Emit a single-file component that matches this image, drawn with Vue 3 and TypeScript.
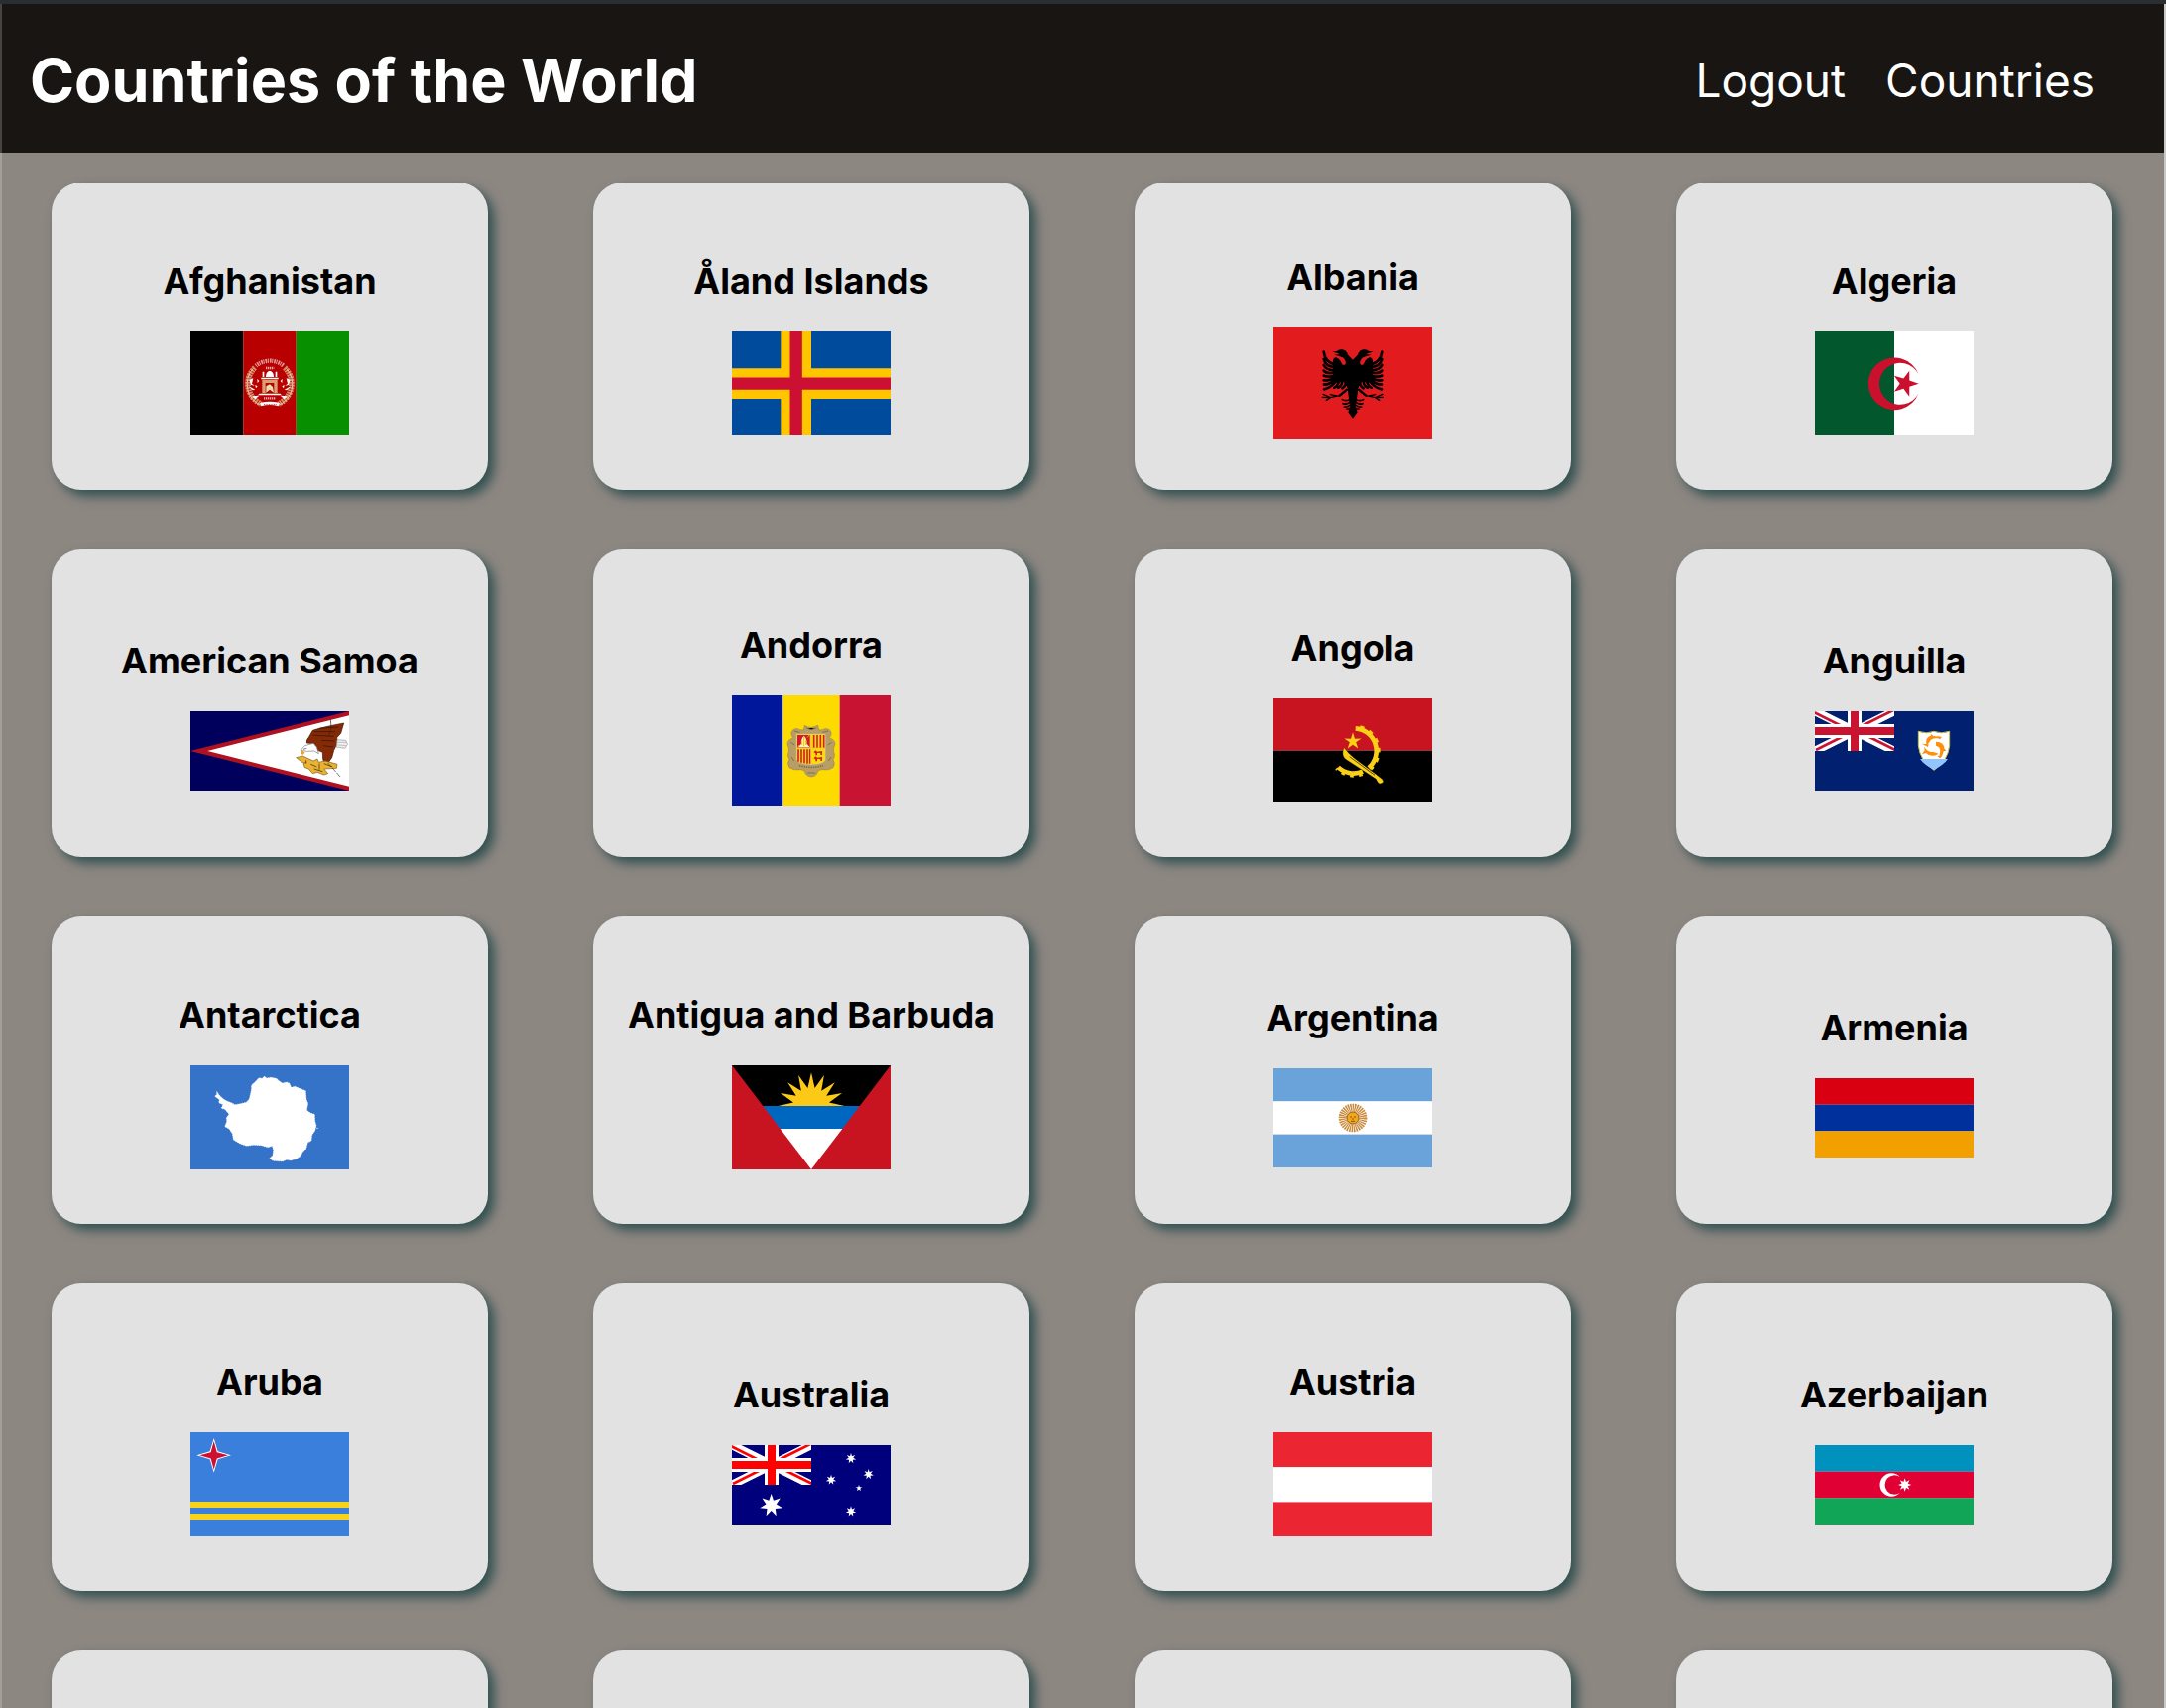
<script setup lang="ts">
interface Country {
  name: string
  height: number
  art: string
}

/* Flags are drawn on a 480-unit wide canvas, three units to the pixel. */

function star(cx: number, cy: number, outer: number, inner: number, points: number, fill: string, turn = -90): string {
  const coords: string[] = []
  for (let i = 0; i < points * 2; i++) {
    const r = i % 2 === 0 ? outer : inner
    const a = ((turn + (i * 180) / points) * Math.PI) / 180
    coords.push(`${(cx + r * Math.cos(a)).toFixed(1)},${(cy + r * Math.sin(a)).toFixed(1)}`)
  }
  return `<polygon points="${coords.join(' ')}" fill="${fill}"/>`
}

function rect(x: number, y: number, w: number, h: number, fill: string): string {
  return `<rect x="${x}" y="${y}" width="${w}" height="${h}" fill="${fill}"/>`
}

function bands(height: number, fills: string[]): string {
  const h = height / fills.length
  return fills.map((fill, i) => rect(0, i * h, 480, h, fill)).join('')
}

function unionJack(blue: string, red: string): string {
  return `<svg x="0" y="0" width="240" height="120" viewBox="0 0 240 120">
    ${rect(0, 0, 240, 120, blue)}
    <path d="M0 0 240 120M240 0 0 120" stroke="#fff" stroke-width="25"/>
    <path d="M-3 3 117 63M3 117 123 57M243 117 123 57M237-3 117 57" stroke="${red}" stroke-width="8"/>
    <path d="M120 0V120M0 60H240" stroke="#fff" stroke-width="42"/>
    <path d="M120 0V120M0 60H240" stroke="${red}" stroke-width="24"/>
  </svg>`
}

const afghanistan = `${rect(0, 0, 160, 317, '#000')}${rect(160, 0, 160, 317, '#b90000')}${rect(320, 0, 160, 317, '#078f00')}
  <g fill="none">
    <path d="M195 110A66 66 0 0 0 214 219M285 110A66 66 0 0 1 266 219" stroke="#d39068" stroke-width="17" stroke-dasharray="6 2"/>
    <path d="M190 112A70 70 0 0 0 210 222M290 112A70 70 0 0 1 270 222" stroke="#e8c3a8" stroke-width="3"/>
    <path d="M198 104A66 66 0 0 1 282 104" stroke="#e29a9a" stroke-width="13" stroke-dasharray="3 3 5 2"/>
    <path d="M228 111H253M222 202H258" stroke="#e9aaaa" stroke-width="7" stroke-dasharray="4 2"/>
    <path d="M210 216Q240 208 270 216L266 226Q240 218 214 226Z" fill="#fff"/>
    <path d="M222 221H260" stroke="#c04040" stroke-width="3" stroke-dasharray="3 2"/>
  </g>
  <g fill="#fff">
    <path d="M228 138Q228 122 240 119Q252 122 252 138ZM214 140H266V145H214ZM218 122H223V138H218ZM257 122H262V138H257ZM209 188H271L276 193H204Z"/>
    <path d="M178 146 190 142 186 158 194 164 183 162ZM302 146 290 142 294 158 286 164 297 162ZM176 166 196 176 188 178ZM304 166 284 176 292 178ZM186 196 208 194 196 205ZM294 196 272 194 284 205ZM202 144 208 150 203 156ZM278 144 272 150 277 156ZM196 162 203 166 198 172ZM284 162 277 166 282 172Z"/>
  </g>
  <path d="M217 146H227V187H217ZM253 146H263V187H253ZM227 147H253V156H227Z" fill="#d9a072"/>
  <path d="M229 185V166L240 160 249 168 252 185 240 176Z" fill="#eadcae"/>`

const aland = `${rect(0, 0, 480, 317, '#004b9c')}
  <path d="M194 0V317M0 158H480" stroke="#ffc600" stroke-width="92"/>
  <path d="M194 0V317M0 158H480" stroke="#cc1034" stroke-width="37"/>`

const eagleHalf = `<path d="M240 98 226 84Q220 68 208 67Q198 65 193 71L178 74 192 77 200 81 184 83Q200 86 212 92Q222 106 217 112Q210 118 206 108Q200 94 189 91Q178 90 180 112L182 165Q198 168 214 164L224 184 226 202 232 240 226 256 240 275Z"/>
  <g fill="none" stroke="#000" stroke-width="8" stroke-linecap="round">
    <path d="M184 112Q156 104 152 74M184 120Q158 118 152 96M184 129Q160 130 152 114M184 137Q160 141 152 131M184 146Q162 152 152 146M184 154Q164 163 152 160M184 160Q168 174 153 173M190 162Q172 184 153 187M198 162Q194 178 184 182M208 164Q206 178 196 182M218 164Q220 176 208 184"/>
    <path d="M230 218Q218 224 208 218M231 226Q220 234 210 230M232 234Q224 242 214 240M234 242Q228 248 222 246" stroke-width="5"/>
    <path d="M216 194 200 206M222 188 205 202" stroke-width="7"/>
    <path d="M204 205 172 212 150 202M172 212 148 211M172 212 160 220M190 207 172 203" stroke-width="4"/>
  </g>`

const albania = `${rect(0, 0, 480, 341, '#e11b1e')}<g>${eagleHalf}</g><g transform="matrix(-1 0 0 1 480 0)">${eagleHalf}</g>`

const algeria = `${rect(0, 0, 240, 317, '#02572c')}${rect(240, 0, 240, 317, '#fff')}
  <path d="M314 130A79 79 0 1 0 314 187A63 63 0 1 1 314 130Z" fill="#cb102e"/>
  ${star(273, 158, 41, 16, 5, '#cb102e', 0)}`

const samoa = `${rect(0, 0, 480, 240, '#00005c')}
  <path d="M0 120 480 0V240Z" fill="#b01120"/><path d="M52 120 480 13V227Z" fill="#fff"/>
  <path d="M464 36 455 67 443 80 445 96 434 118 428 140 418 154 405 156 401 145 400 124 385 118 375 98 352 96Q350 86 358 79L370 58Q400 48 464 36Z" fill="#852a06" stroke="#3c1604" stroke-width="2"/>
  <path d="M374 62 438 62M370 72 434 76M390 52 448 48M396 88 436 90M402 104 432 108" stroke="#4c1a06" stroke-width="3" fill="none"/>
  <path d="M424 26 426 48 418 76" stroke="#332219" stroke-width="2" fill="none"/>
  <path d="M372 97 346 104 334 118 352 121 374 120 388 128 382 108Z" fill="#fff" stroke="#777" stroke-width="2"/>
  <path d="M342 115 352 112" stroke="#333" stroke-width="2"/>
  <path d="M336 119 347 124 340 132 333 127Z" fill="#e2a326"/>
  <path d="M444 86 470 88 475 100 468 112 442 108Z" fill="#eee" stroke="#999" stroke-width="2"/>
  <path d="M445 94 472 94M445 102 471 104" stroke="#aaa" stroke-width="2"/>
  <path d="M320 140 340 135 354 142 372 150 384 144 388 154 408 150 444 160 442 172 404 174 416 188 404 192 384 184 370 188 358 174 346 170 342 158 352 156 338 154Z" fill="#e9b233" stroke="#7c5a18" stroke-width="2"/>
  <path d="M350 148V156M364 160 382 168M390 158V176M404 158 430 168M374 174 400 182" stroke="#6e4e14" stroke-width="3"/>
  <path d="M416 156 455 200" stroke="#333" stroke-width="2" stroke-dasharray="16 4"/>`

const andorra = `${rect(0, 0, 154, 336, '#00179c')}${rect(154, 0, 172, 336, '#fedb00')}${rect(326, 0, 154, 336, '#c81333')}
  <path d="M220 91Q230 98 240 97T260 91L263 105Q274 106 282 101Q296 100 300 112Q302 122 294 128Q312 134 312 148Q306 158 308 170Q314 182 306 194Q314 206 306 218Q292 228 272 224Q258 226 258 236Q250 246 240 246T222 236Q222 226 208 224Q188 228 174 218Q166 206 174 194Q166 182 172 170Q174 158 168 148Q168 134 186 128Q178 122 180 112Q184 100 198 101Q206 106 217 105Z" fill="#b79e66" stroke="#9d8650" stroke-width="2"/>
  <path d="M188 108 206 112M274 112 292 108M178 142 190 150M302 142 290 150M180 186 188 198M300 186 292 198M226 99 240 104 254 99M228 234H252" stroke="#80704a" stroke-width="3"/>
  <path d="M204 212Q240 222 276 212" stroke="#7f6c43" stroke-width="5" fill="none" stroke-dasharray="4 3"/>
  <path d="M196 118H282V196Q276 207 240 208Q202 207 196 194Z" fill="#fddc00" stroke="#ddd2a6" stroke-width="2"/>
  <path d="M198 120H236V158H198Z" fill="#d51a24"/>
  <path d="M248 120V158M258 120V158M268 120V158M278 120V158" stroke="#d3202a" stroke-width="5"/>
  <path d="M201 163V200M210 163V203M219 163V205M228 163V206M236 163V206" stroke="#d3202a" stroke-width="5"/>
  <path d="M218 122Q228 132 226 146L236 157H200L210 146Q208 132 218 122Z" fill="#fff6c8"/>
  <path d="M218 124V154M212 136V150M224 136V150" stroke="#e5c500" stroke-width="3"/>
  <path d="M228 128 234 120M204 150 200 157" stroke="#e5a500" stroke-width="3"/>
  <path d="M247 172 253 166 258 170 273 168V180H268V174H258V181H253V175ZM247 190 253 184 258 188 273 186V198H268V192H258V199H253V193Z" fill="#d3202a"/>
  <path d="M239 119V208M197 160H281" stroke="#d7c379" stroke-width="2"/>`

const angola = `${rect(0, 0, 480, 158, '#c81421')}${rect(0, 158, 480, 159, '#000')}
  <g fill="none" stroke="#f9d015">
    <path d="M248 91A68 68 0 0 1 288 210M270 221A68 68 0 0 1 196 208" stroke-width="14"/>
    <path d="M262 86A75 75 0 0 1 294 214" stroke-width="9" stroke-dasharray="13 17"/>
    <path d="M269 230A75 75 0 0 1 190 212" stroke-width="9" stroke-dasharray="11 16"/>
  </g>
  ${star(240, 130, 27, 10, 5, '#f9d015')}
  <path d="M213 148Q204 172 218 184L286 228 310 244Q318 264 328 256 336 252 328 244L308 228 254 188Q226 168 213 148Z" fill="#f9d015" stroke="#000" stroke-width="1"/>
  <path d="M230 176 306 232" stroke="#000" stroke-width="2"/>`

const anguilla = `${rect(0, 0, 480, 240, '#012070')}${unionJack('#012070', '#c81430')}
  <path d="M313 61Q338 70 360 61Q382 70 407 61V104Q402 150 360 178Q318 150 313 104Z" fill="#fff" stroke="#c3c33c" stroke-width="3"/>
  <path d="M318 144H402Q390 162 360 176Q330 162 318 144Z" fill="#92c5ff"/>
  <g fill="#ff8f0e">
    <path d="M338 104Q332 78 350 74L352 69 358 75Q372 74 382 84L370 82Q352 80 346 94Z"/>
    <path d="M366 92Q390 92 391 112L397 120 389 120Q386 138 376 142L378 126Q382 108 366 104Z"/>
    <path d="M374 128Q352 142 336 126L324 130 332 118 330 108Q344 126 356 122Z"/>
    <path d="M323 98 344 100 342 108ZM368 74 384 78 378 84ZM370 136 380 142 382 132Z"/>
  </g>`

const antarctica = `${rect(0, 0, 480, 317, '#3573c8')}
  <path d="M80 79 87 90 101 103 112 109 124 113 135 119 151 116 169 112 178 102 184 76 185 60 198 48 207 38 217 40 224 33 230 39 244 37 260 40 268 47 278 54 291 51 299 54 305 67 316 64 330 70 349 77 351 103 356 116 352 136 365 145 376 148 377 169 381 182 377 198 368 211 366 228 355 234 350 253 340 261 334 274 321 283 304 288 291 286 279 291 250 289 239 282 249 272 251 256 247 244 235 248 214 242 191 241 170 244 150 237 130 225 127 207 117 192 104 185 110 170 109 158 117 148 104 133 93 130 99 119 86 113 88 104 74 94 80 88Z" fill="#fff" stroke="#fff" stroke-width="2" stroke-dasharray="3 4"/>
  <circle cx="384" cy="190" r="2" fill="#fff"/>`

const antigua = `${rect(0, 0, 480, 317, '#c81421')}
  <svg x="0" y="0" width="480" height="123" viewBox="0 0 480 123"><path d="M0 0H480L240 315Z"/>${star(240, 123, 101, 55, 16, '#fcca16')}</svg>
  <path d="M94 123H386L334 192H146Z" fill="#0067c1"/><path d="M146 192H334L240 315Z" fill="#fff"/>`

const argentina = `${bands(300, ['#6aa2da', '#fff', '#6aa2da'])}
  <circle cx="240" cy="150" r="31" fill="none" stroke="#c98a3c" stroke-width="24" stroke-dasharray="4 2"/>
  <circle cx="240" cy="150" r="18" fill="#f3a71b" stroke="#935a10" stroke-width="3"/>
  <path d="M231 147H237M243 147H249M240 150V156M234 160H246" stroke="#8b5210" stroke-width="3"/>`

const aruba = `${rect(0, 0, 480, 317, '#3a7fdb')}${rect(0, 210, 480, 18, '#f9d31b')}${rect(0, 246, 480, 18, '#f9d31b')}
  ${star(71, 70, 52, 17, 4, '#fff')}${star(71, 70, 43, 13, 4, '#ce1130')}`

const australia = `${rect(0, 0, 480, 240, '#00007d')}${unionJack('#00007d', '#ff0000')}
  ${star(119, 182, 35, 16, 7, '#fff')}${star(360, 40, 16, 7, 7, '#fff')}${star(413, 88, 16, 7, 7, '#fff')}
  ${star(300, 105, 16, 7, 7, '#fff')}${star(360, 200, 16, 7, 7, '#fff')}${star(384, 130, 10, 4, 5, '#fff')}`

const azerbaijan = `${bands(240, ['#0092bc', '#e00034', '#10a557'])}
  <path d="M257 96A35 35 0 1 0 257 144A29 29 0 1 1 257 96Z" fill="#fff"/>
  ${star(272, 120, 20, 10, 8, '#fff')}`

const countries: Country[] = [
  { name: 'Afghanistan', height: 317, art: afghanistan },
  { name: 'Åland Islands', height: 317, art: aland },
  { name: 'Albania', height: 341, art: albania },
  { name: 'Algeria', height: 317, art: algeria },
  { name: 'American Samoa', height: 240, art: samoa },
  { name: 'Andorra', height: 336, art: andorra },
  { name: 'Angola', height: 317, art: angola },
  { name: 'Anguilla', height: 240, art: anguilla },
  { name: 'Antarctica', height: 317, art: antarctica },
  { name: 'Antigua and Barbuda', height: 317, art: antigua },
  { name: 'Argentina', height: 300, art: argentina },
  { name: 'Armenia', height: 240, art: bands(240, ['#d90012', '#00309b', '#f2a000']) },
  { name: 'Aruba', height: 317, art: aruba },
  { name: 'Australia', height: 240, art: australia },
  { name: 'Austria', height: 317, art: bands(317, ['#ec2532', '#fff', '#ec2532']) },
  { name: 'Azerbaijan', height: 240, art: azerbaijan },
]

const pendingCards = 4
</script>

<template>
  <div class="page">
    <header class="bar">
      <h1 class="title">Countries of the World</h1>
      <nav class="links">
        <a href="#logout">Logout</a>
        <a href="#countries">Countries</a>
      </nav>
    </header>
    <main class="grid">
      <article v-for="country in countries" :key="country.name" class="card">
        <h2 class="name">{{ country.name }}</h2>
        <svg class="flag" :viewBox="`0 0 480 ${country.height}`" aria-hidden="true" v-html="country.art"></svg>
      </article>
      <div v-for="n in pendingCards" :key="n" class="card" aria-hidden="true"></div>
    </main>
  </div>
</template>

<style>
body {
  margin: 0;
  background: #8d8782;
}
</style>

<style scoped>
.page {
  position: relative;
  height: 100vh;
  overflow: hidden;
  background: #8d8782;
  font-family: Inter, "Liberation Sans", sans-serif;
}

.page::before,
.page::after {
  content: "";
  position: absolute;
  top: 4px;
  bottom: 0;
  width: 2px;
}

.page::before {
  left: 0;
  background: rgba(255, 255, 255, 0.2);
}

.page::after {
  right: 0;
  background: #c8c8c8;
}

.bar {
  display: flex;
  align-items: center;
  justify-content: space-between;
  box-sizing: border-box;
  height: 154px;
  padding: 4px 72px 0 30px;
  border-top: 4px solid #2b2e31;
  background: #191512;
  color: #fff;
}

.title {
  margin: 0;
  font-size: 61px;
  font-weight: 700;
  line-height: 72px;
}

.links {
  display: flex;
  gap: 40px;
  font-size: 46px;
  line-height: 60px;
}

.links a {
  color: inherit;
  text-decoration: none;
}

.grid {
  display: grid;
  grid-template-columns: repeat(4, 1fr);
}

.card {
  display: flex;
  flex-direction: column;
  align-items: center;
  justify-content: center;
  box-sizing: border-box;
  height: 310px;
  margin: 30px 54px 30px 52px;
  border-radius: 30px;
  background: #e2e2e2;
  box-shadow: 6px 6px 12px darkslategray;
}

.name {
  margin: 22px 0 29px;
  color: #000;
  font-size: 36px;
  font-weight: 700;
  line-height: 44px;
  white-space: nowrap;
}

.flag {
  display: block;
  width: 160px;
}
</style>
